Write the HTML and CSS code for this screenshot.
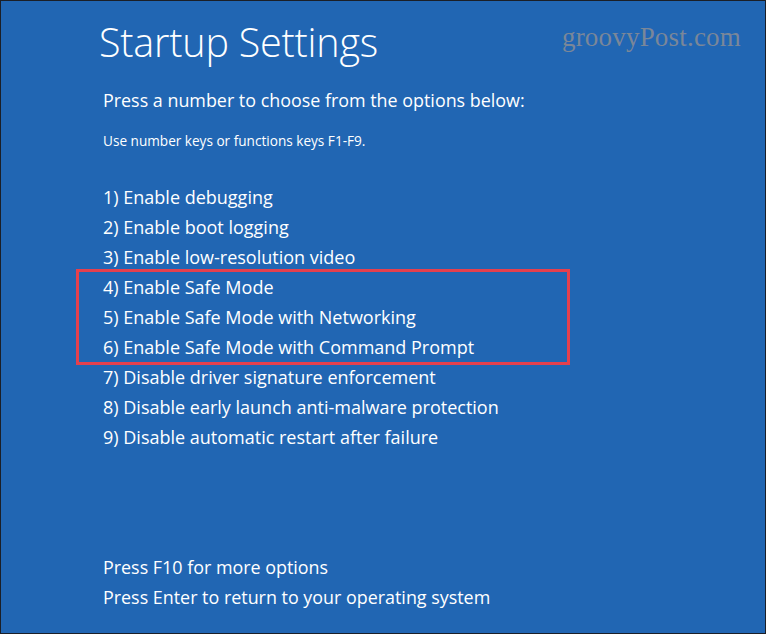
FILE: index.html
```html
<!DOCTYPE html>
<html>
<head>
<meta charset="utf-8">
<link rel="stylesheet" href="styles.css">
</head>
<body>
<div class="screen">
  <div class="watermark">groovyPost.com</div>
  <h1 class="title">Startup Settings</h1>
  <p class="lead">Press a number to choose from the options below:</p>
  <p class="hint">Use number keys or functions keys F1-F9.</p>
  <ul class="options">
    <li>1) Enable debugging</li>
    <li>2) Enable boot logging</li>
    <li>3) Enable low-resolution video</li>
    <li class="group">
      <ul class="highlight">
        <li>4) Enable Safe Mode</li>
        <li>5) Enable Safe Mode with Networking</li>
        <li>6) Enable Safe Mode with Command Prompt</li>
      </ul>
    </li>
    <li>7) Disable driver signature enforcement</li>
    <li>8) Disable early launch anti-malware protection</li>
    <li>9) Disable automatic restart after failure</li>
  </ul>
  <div class="footer">
    <p>Press F10 for more options</p>
    <p>Press Enter to return to your operating system</p>
  </div>
</div>
</body>
</html>
```
FILE: styles.css
```css
html, body {
  margin: 0;
  padding: 0;
}
body {
  width: 766px;
  height: 634px;
  overflow: hidden;
  font-family: "Open Sans", "Noto Sans", sans-serif;
  color: #ffffff;
}
.screen {
  position: relative;
  box-sizing: border-box;
  width: 766px;
  height: 634px;
  background: #2166b3;
  border: 1px solid #1b1f27;
  padding: 17px 0 0 98px;
}
.watermark {
  position: absolute;
  top: 21px;
  right: 24px;
  font-family: "Liberation Serif", "DejaVu Serif", serif;
  font-size: 27px;
  color: #7a8799;
  letter-spacing: 0.2px;
}
.title {
  margin: 0;
  font-weight: 300;
  font-size: 39.5px;
  line-height: 48px;
  letter-spacing: -0.2px;
}
.lead {
  margin: 19px 0 0 4px;
  font-size: 17.9px;
  line-height: 30px;
}
.hint {
  margin: 16px 0 0 4px;
  font-size: 13.6px;
  line-height: 20px;
}
.options {
  list-style: none;
  margin: 31px 0 0 4px;
  padding: 0;
}
.options li {
  font-size: 18px;
  line-height: 30px;
  height: 30px;
}
.options li.group {
  height: auto;
}
.highlight {
  list-style: none;
  margin: -3px 0 -3px -27px;
  padding: 0 0 0 24px;
  width: 464px;
  border: 3px solid #e5404d;
}
.footer {
  margin: 100px 0 0 4px;
}
.footer p {
  margin: 0;
  font-size: 17.9px;
  line-height: 30px;
}
```
